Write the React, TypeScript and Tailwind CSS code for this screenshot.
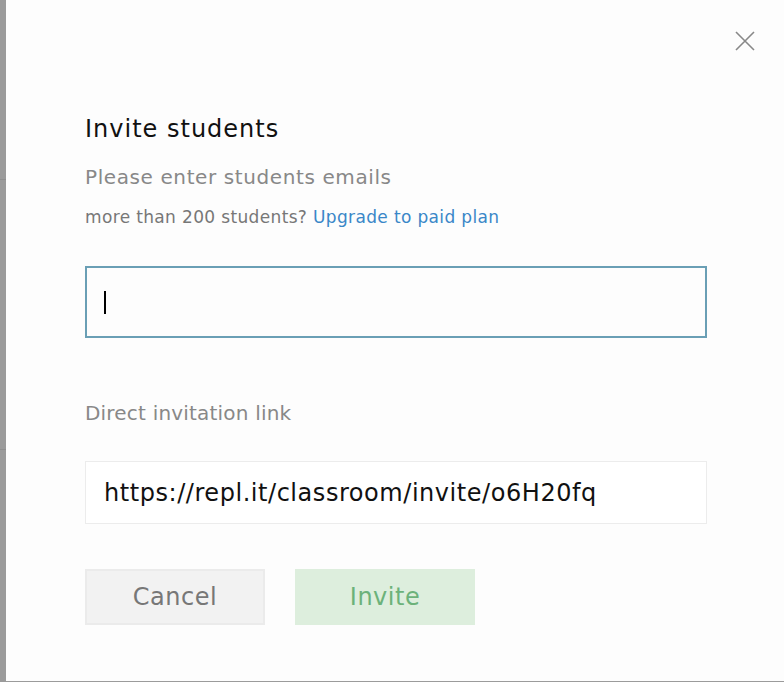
import React from "react";

export default function App() {
  return (
    <div className="flex h-[682px] w-[784px] overflow-hidden bg-[#fdfdfd]" style={{ fontFamily: "'DejaVu Sans', 'Open Sans', sans-serif" }}>
      <div className="flex w-[6px] flex-col bg-[#9b9b9b]">
        <div className="h-[179px]" />
        <div className="h-px bg-[#8f8f8f]" />
        <div className="h-[269px]" />
        <div className="h-px bg-[#8f8f8f]" />
      </div>
      <div className="relative flex flex-1 flex-col border-b border-[#9b9b9b] pl-[79px] pr-[77px]">
        <button className="absolute right-[29px] top-[31px] flex h-[20px] w-[20px] items-center justify-center text-[#888]">
          <svg width="20" height="20" viewBox="0 0 20 20" fill="none" stroke="currentColor" strokeWidth="1.6">
            <path d="M1 1 L19 19 M19 1 L1 19" />
          </svg>
        </button>
        <h1 className="mt-[114px] text-[24px] leading-[30px] tracking-[1px] text-[#111]">Invite students</h1>
        <p className="mt-[20px] text-[20px] leading-[26px] tracking-[0.6px] text-[#888]">Please enter students emails</p>
        <p className="mt-[16px] text-[17px] leading-[23px] tracking-[0.35px] text-[#777]">
          more than 200 students? <span className="text-[#3a87c8]">Upgrade to paid plan</span>
        </p>
        <div className="mt-[37px] flex h-[72px] items-center border-2 border-[#6a9fb5] bg-[#fdfdfd] px-[17px]">
          <div className="h-[23px] w-[2px] bg-black" />
        </div>
        <p className="mt-[62px] text-[20px] leading-[26px] tracking-[0.2px] text-[#888]">Direct invitation link</p>
        <div className="mt-[35px] flex h-[63px] items-center border border-[#ececec] bg-white px-[18px] text-[24px] tracking-[0.55px] text-[#111]">
          https://repl.it/classroom/invite/o6H20fq
        </div>
        <div className="mt-[45px] flex gap-[30px]">
          <button className="flex h-[56px] w-[180px] items-center justify-center border-2 border-[#ebebeb] bg-[#f2f2f2] text-[24px] tracking-[0.5px] text-[#777]">
            Cancel
          </button>
          <button className="flex h-[56px] w-[180px] items-center justify-center bg-[#ddeedd] text-[24px] tracking-[0.5px] text-[#6cb27a]">
            Invite
          </button>
        </div>
      </div>
    </div>
  );
}
